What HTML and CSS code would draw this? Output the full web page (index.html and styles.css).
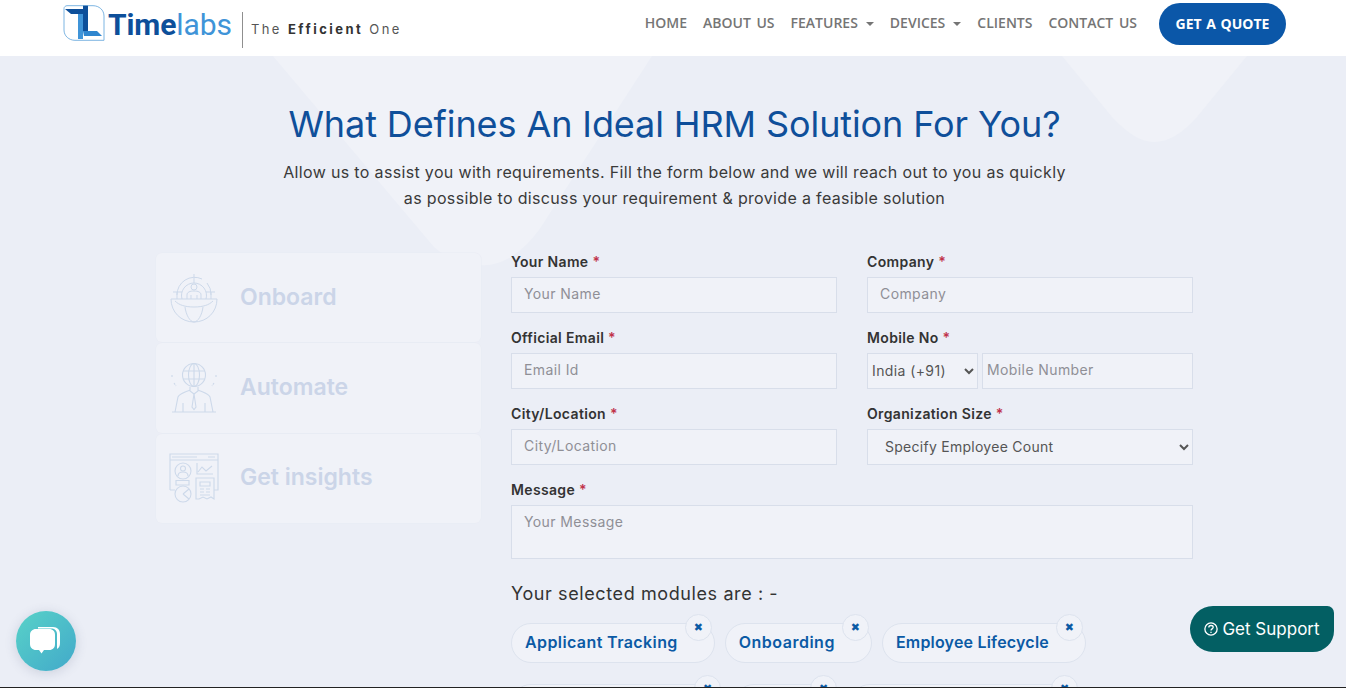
FILE: index.html
```html
<!DOCTYPE html>
<html lang="en">
<head>
<meta charset="utf-8">
<title>Timelabs</title>
<link rel="stylesheet" href="styles.css">
</head>
<body>
<header class="topbar">
  <a class="brand" href="#">
    <svg class="brand-mark" viewBox="0 0 42 36" width="42" height="36">
      <path d="M4 .7H30C36 .7 41 5 41 11V35.3H12C6 35.3 1 31 1 25V3.5C1 2 2.5 .7 4 .7Z" fill="none" stroke="#7db5e2" stroke-width="1"/>
      <path d="M2 4H20L20 9H8Z" fill="#0d4f9a"/>
      <path d="M15 9H20V34H15Z" fill="#3f94d8"/>
      <path d="M20 .7H25V26H20Z" fill="#0d4f9a"/>
      <path d="M25 26H34L39 31H21L20 26Z" fill="#2f86cf"/>
    </svg>
    <span class="brand-name"><b>Time</b>labs</span>
    <span class="brand-rule"></span>
    <span class="brand-tag">The <b>Efficient</b> One</span>
  </a>
  <nav class="nav">
    <a href="#">HOME</a>
    <a href="#">ABOUT US</a>
    <a href="#" class="drop">FEATURES</a>
    <a href="#" class="drop">DEVICES</a>
    <a href="#">CLIENTS</a>
    <a href="#">CONTACT US</a>
    <a href="#" class="quote">GET A QUOTE</a>
  </nav>
</header>

<main class="page">
  <svg class="bg-shapes" viewBox="0 0 1346 632" width="1346" height="632" aria-hidden="true">
    <path d="M273 0H652L539 174Q510 212 480 209Q450 206 434 191Z" fill="#f0f2f8"/>
    <path d="M1062 0L1112 61Q1135 86 1154 86Q1175 86 1197 61L1247 0Z" fill="#f0f2f8"/>
  </svg>
  <section class="intro">
    <h1>What Defines An Ideal HRM Solution For You?</h1>
    <p>Allow us to assist you with requirements. Fill the form below and we will reach out to you as quickly<br>as possible to discuss your requirement &amp; provide a feasible solution</p>
  </section>

  <section class="content">
    <aside class="tabs">
      <div class="tab">
        <svg class="tab-icon" viewBox="0 0 50 50" width="50" height="50" fill="none" stroke="#cdd9ea" stroke-width="1">
          <path d="M2 26H48M2 26C2 39 12 49 25 49S48 39 48 26M6 28C10 32 16 34 25 34S40 32 44 28"/>
          <path d="M16 34C17 42 21 49 25 49S33 42 34 34"/>
          <path d="M8 22A17.500 17.500 0 0 1 33 6M38 10A17.500 17.500 0 0 1 42 22" />
          <path d="M13 26A12.500 12.500 0 1 1 37 26"/>
          <path d="M25 1V10M4 19H13M37 19H46M8 19V26M42 19V26"/>
          <circle cx="25" cy="14" r="3"/>
          <path d="M18 26V22C18 19 21 18 25 18S32 19 32 22V26M22 22V26M28 22V26"/>
        </svg>
        <span>Onboard</span>
      </div>
      <div class="tab">
        <svg class="tab-icon" viewBox="0 0 50 50" width="50" height="50" fill="none" stroke="#cdd9ea" stroke-width="1.1">
          <circle cx="25" cy="12" r="11.500"/>
          <ellipse cx="25" cy="12" rx="5.500" ry="11.500"/>
          <path d="M25 .5V23.500M14 8H36M14 16H36"/>
          <path d="M3 49H47M6 49L9 34C10 31 14 30 21 27M44 49L41 34C40 31 36 30 29 27M21 24V28L25 31L29 28V24"/>
          <path d="M25 31L23 44L25 46.500L27 44Z"/>
          <path d="M14 40V49M36 40V49"/>
          <path d="M3 12V14M47 12V14M5 20L7 23M45 20L43 23" stroke-dasharray="2 1"/>
        </svg>
        <span>Automate</span>
      </div>
      <div class="tab">
        <svg class="tab-icon" viewBox="0 0 50 50" width="50" height="50" fill="none" stroke="#cdd9ea" stroke-width="1.1">
          <path d="M1 37V1H49V37H45M1 37H6"/>
          <path d="M3 4H28M39 4H46M1 7H49"/>
          <circle cx="14" cy="18" r="8"/>
          <circle cx="14" cy="15.500" r="2.500"/>
          <path d="M9 23C9 20 11 19 14 19S19 20 19 23"/>
          <path d="M7 27.500H20V32H7Z"/>
          <path d="M28 10V21H44M29 19L33 14L37 18L43 13"/>
          <path d="M27 46V25H45V46L42 44L38 46L34 44L30 46Z"/>
          <path d="M31 29H41V33H31ZM31 36H35M37 36H41M31 39H35M37 39H41M31 42H41"/>
          <circle cx="14" cy="41" r="8"/>
          <path d="M14 41L20 36M14 41L20 46"/>
        </svg>
        <span>Get insights</span>
      </div>
    </aside>

    <form class="form">
      <div class="field">
        <label>Your Name <i>*</i></label>
        <input type="text" placeholder="Your Name">
      </div>
      <div class="field">
        <label>Company <i>*</i></label>
        <input type="text" placeholder="Company">
      </div>
      <div class="field">
        <label>Official Email <i>*</i></label>
        <input type="text" placeholder="Email Id">
      </div>
      <div class="field">
        <label>Mobile No <i>*</i></label>
        <div class="phone">
          <select class="code"><option>India (+91)</option></select>
          <input class="mobile" type="text" placeholder="Mobile Number">
        </div>
      </div>
      <div class="field">
        <label>City/Location <i>*</i></label>
        <input type="text" placeholder="City/Location">
      </div>
      <div class="field">
        <label>Organization Size <i>*</i></label>
        <select class="size"><option>Specify Employee Count</option></select>
      </div>
      <div class="field wide">
        <label>Message <i>*</i></label>
        <textarea placeholder="Your Message"></textarea>
      </div>
      <div class="modules wide">
        <h2>Your selected modules are : -</h2>
        <ul class="chips">
          <li>Applicant Tracking<button type="button">✖</button></li>
          <li>Onboarding<button type="button">✖</button></li>
          <li>Employee Lifecycle<button type="button">✖</button></li>
          <li>Time and Attendance<button type="button">✖</button></li>
          <li>Payroll<button type="button">✖</button></li>
          <li>Performance Appraisal<button type="button">✖</button></li>
        </ul>
      </div>
    </form>
  </section>
</main>

<button class="chat" type="button" aria-label="Chat">
  <svg viewBox="0 0 34 34" width="34" height="34">
    <path d="M9 3H24C28.500 3 31 6 31 10V19C31 22 30 24 28 25V10C28 6.500 25.500 4.500 22 4.500H9Z" fill="#fff"/>
    <path d="M7 5H20C24 5 26 7.500 26 11V20C26 23.500 24 26 20 26H15L12.500 29.500L10 26H7C3.500 26 1 23.500 1 20V11C1 7.500 3.500 5 7 5Z" fill="#fff"/>
  </svg>
</button>
<a class="support" href="#">
  <svg viewBox="0 0 16 16" width="14" height="14" fill="none" stroke="#fff" stroke-width="1.5">
    <circle cx="8" cy="8" r="7"/>
    <path d="M5.500 6.200C5.500 4.800 6.700 4 8 4S10.500 4.800 10.500 6.100C10.500 7.800 8 7.900 8 9.700"/>
    <path d="M8 11V12.500"/>
  </svg>
  Get Support
</a>
<div class="edge"></div>
</body>
</html>
```

FILE: styles.css
```css
* { box-sizing: border-box; }
html, body { margin: 0; height: 688px; overflow: hidden; }
body { font-family: Inter, "Noto Sans", sans-serif; background: #ebeef6; color: #333; }
a { text-decoration: none; color: inherit; }

.topbar {
  height: 56px;
  background: #fff;
  display: flex;
  justify-content: space-between;
  padding: 0 60px 0 63px;
}
.brand { display: flex; align-items: flex-start; padding-top: 5px; }
.brand-mark { flex: none; }
.brand-name {
  font: 400 30px/36px Roboto, sans-serif;
  color: #3f94d8;
  margin: 2px 0 0 3px;
  letter-spacing: -.1px;
}
.brand-name b { font-weight: 700; color: #0d4f9a; }
.brand-rule { width: 1px; height: 36px; background: #8f8f8f; margin: 7px 8px 0 10px; }
.brand-tag {
  font: 400 13px/18px Inter, sans-serif;
  letter-spacing: 2.450px;
  color: #555;
  margin-top: 15px;
}
.brand-tag b { font-weight: 700; color: #333; }

.nav {
  display: flex;
  align-items: flex-start;
  gap: 16px;
  font: 600 14px/20px "Open Sans", sans-serif;
  word-spacing: 2px;
  color: #757575;
  padding-top: 13px;
}
.drop::after {
  content: "";
  display: inline-block;
  margin-left: 8px;
  vertical-align: 2px;
  border: 4px solid transparent;
  border-top-color: #757575;
  border-bottom: 0;
}
.quote {
  margin: -10px 0 0 6px;
  width: 127px;
  height: 42px;
  border-radius: 21px;
  background: #0b57a8;
  color: #fff;
  font-weight: 700;
  word-spacing: 1px;
  line-height: 42px;
  text-align: center;
}

.page { position: relative; height: 632px; padding: 46px 0 0 3px; }
.bg-shapes { position: absolute; left: 0; top: 0; }
.intro { position: relative; text-align: center; }
.intro h1 {
  margin: 0;
  font-weight: 400;
  font-size: 36px;
  line-height: 44px;
  letter-spacing: -.1px;
  color: #0f4f9a;
}
.intro p {
  margin: 13px 0 0;
  font-size: 16px;
  line-height: 26px;
  letter-spacing: .34px;
  color: #3a3a3a;
}

.content {
  position: relative;
  width: 1037px;
  margin: 42px auto 0;
  display: grid;
  grid-template-columns: 325px 682px;
  column-gap: 30px;
  align-items: start;
}
.tabs { display: flex; flex-direction: column; gap: 1px; }
.tab {
  height: 89.330px;
  display: flex;
  align-items: center;
  gap: 21px;
  padding-left: 13px;
  background: #f0f2f8;
  border-radius: 6px;
  box-shadow: 0 0 0 .5px #e8ebf3;
  font-size: 23px;
  font-weight: 600;
  color: #cbd5e8;
}
.tab span { padding-bottom: 2px; }
.tab-icon { flex: none; }

.form {
  display: grid;
  grid-template-columns: 326px 326px;
  column-gap: 30px;
  row-gap: 16px;
}
.wide { grid-column: 1 / -1; }
.field { display: flex; flex-direction: column; gap: 6px; }
.field label { font-size: 14px; line-height: 18px; font-weight: 600; letter-spacing: .35px; color: #333; }
.field label i { font-style: normal; color: #c0324a; }
.field input, .field select, .field textarea {
  height: 36px;
  border: 1px solid #d8deea;
  background: #f0f2f8;
  border-radius: 0;
  font: 400 14px Inter, sans-serif;
  letter-spacing: .4px;
  color: #555;
  outline: 0;
  padding: 0 12px 3px;
  width: 100%;
}
.field textarea { height: 54px; padding-top: 7px; resize: none; display: block; }
::placeholder { color: #8f8f96; opacity: 1; }
.phone { display: flex; gap: 4px; }
.field .code { flex: none; width: 111px; padding: 0 0 2px; }
.field .mobile { flex: 1; padding: 0 4px 3px; }
.field .size { padding: 0 0 2px 13px; letter-spacing: .27px; }

.modules h2 { margin: 8px 0 0; font-size: 18px; line-height: 22px; font-weight: 400; letter-spacing: .6px; color: #333; }
.chips {
  list-style: none;
  margin: 18px 0 0;
  padding: 0;
  display: flex;
  flex-wrap: wrap;
  gap: 21px 10px;
}
.chips li {
  position: relative;
  height: 40px;
  padding: 0 36px 0 13px;
  border: 1px solid #dde3ee;
  border-radius: 20px;
  background: #f0f2f8;
  font-size: 16px;
  font-weight: 600;
  line-height: 36px;
  letter-spacing: .4px;
  color: #0b5aa5;
  white-space: nowrap;
}
.chips li:nth-child(2) { letter-spacing: .5px; }
.chips li:nth-child(3) { letter-spacing: .2px; }
.chips li:nth-child(4) { width: 213px; letter-spacing: 0; padding-right: 0; }
.chips li:nth-child(5) { width: 106px; letter-spacing: 0; padding-right: 0; }
.chips li:nth-child(6) { width: 231px; letter-spacing: 0; padding-right: 0; }
.chips button {
  position: absolute;
  top: -10px;
  right: 2px;
  width: 27px;
  height: 27px;
  padding: 0;
  border: 1px solid #dde3ee;
  border-radius: 50%;
  background: #f0f2f8;
  color: #0b5aa5;
  font: 700 11px/25px "DejaVu Sans", sans-serif;
}

.chat {
  position: fixed;
  left: 16px;
  top: 611px;
  width: 60px;
  height: 60px;
  padding: 0;
  border: 0;
  border-radius: 50%;
  background: linear-gradient(135deg, #58d2c8, #42a9ca);
  box-shadow: 0 2px 12px rgba(60, 70, 110, .18);
  display: flex;
  align-items: center;
  justify-content: center;
}
.support {
  position: fixed;
  left: 1190px;
  top: 606px;
  width: 144px;
  height: 46px;
  border-radius: 24px 7px 22px 24px;
  background: #035f63;
  color: #fff;
  font-size: 17px;
  display: flex;
  align-items: center;
  justify-content: center;
  gap: 4px;
}
.edge { position: fixed; left: 0; right: 0; bottom: 0; height: 1px; background: #222; }
```
